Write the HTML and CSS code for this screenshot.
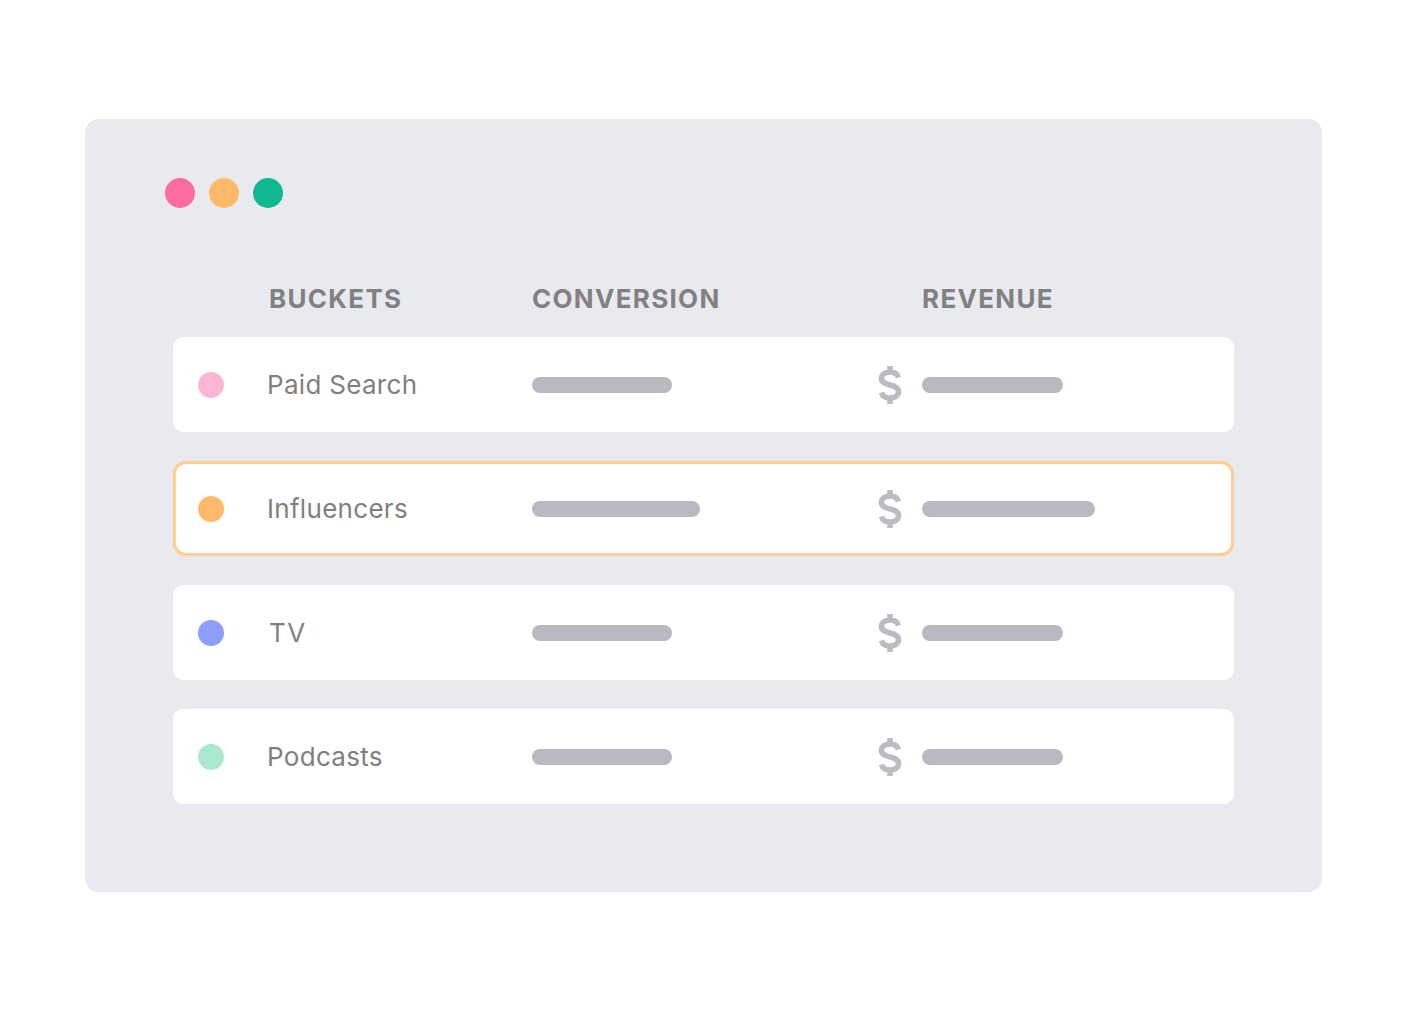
FILE: index.html
```html
<!DOCTYPE html>
<html>
<head>
<meta charset="utf-8">
<link rel="stylesheet" href="styles.css">
</head>
<body>
<div class="panel">
  <div class="lights">
    <span class="light red"></span>
    <span class="light amber"></span>
    <span class="light green"></span>
  </div>
  <div class="table">
    <div class="head">
      <span></span>
      <span class="h-bucket">BUCKETS</span>
      <span>CONVERSION</span>
      <span></span>
      <span>REVENUE</span>
    </div>
    <div class="row">
      <span class="dot pink"></span>
      <span class="name">Paid Search</span>
      <span class="bar" style="width:140px"></span>
      <svg class="dollar" viewBox="0 0 24 40"><path d="M12 1v6M12 33v6M20.5 12.5C19.5 9 16.5 7 12 7 6.5 7 3.5 10 3.5 13.5c0 4 3.5 5.3 8.5 6.5s8.5 2.5 8.5 6.5c0 4-3.5 6.5-8.5 6.5-4.5 0-7.5-2-8.5-5.5"/></svg>
      <span class="bar" style="width:141px"></span>
    </div>
    <div class="row active">
      <span class="dot orange"></span>
      <span class="name">Influencers</span>
      <span class="bar" style="width:168px"></span>
      <svg class="dollar" viewBox="0 0 24 40"><path d="M12 1v6M12 33v6M20.5 12.5C19.5 9 16.5 7 12 7 6.5 7 3.5 10 3.5 13.5c0 4 3.5 5.3 8.5 6.5s8.5 2.5 8.5 6.5c0 4-3.5 6.5-8.5 6.5-4.5 0-7.5-2-8.5-5.5"/></svg>
      <span class="bar" style="width:173px"></span>
    </div>
    <div class="row">
      <span class="dot blue"></span>
      <span class="name tv">TV</span>
      <span class="bar" style="width:140px"></span>
      <svg class="dollar" viewBox="0 0 24 40"><path d="M12 1v6M12 33v6M20.5 12.5C19.5 9 16.5 7 12 7 6.5 7 3.5 10 3.5 13.5c0 4 3.5 5.3 8.5 6.5s8.5 2.5 8.5 6.5c0 4-3.5 6.5-8.5 6.5-4.5 0-7.5-2-8.5-5.5"/></svg>
      <span class="bar" style="width:141px"></span>
    </div>
    <div class="row">
      <span class="dot mint"></span>
      <span class="name">Podcasts</span>
      <span class="bar" style="width:140px"></span>
      <svg class="dollar" viewBox="0 0 24 40"><path d="M12 1v6M12 33v6M20.5 12.5C19.5 9 16.5 7 12 7 6.5 7 3.5 10 3.5 13.5c0 4 3.5 5.3 8.5 6.5s8.5 2.5 8.5 6.5c0 4-3.5 6.5-8.5 6.5-4.5 0-7.5-2-8.5-5.5"/></svg>
      <span class="bar" style="width:141px"></span>
    </div>
  </div>
</div>
</body>
</html>
```

FILE: styles.css
```css
html, body {
  margin: 0;
  padding: 0;
  background: #ffffff;
}
body {
  font-family: Inter, "Liberation Sans", sans-serif;
}
.panel {
  box-sizing: border-box;
  margin: 119px 0 0 85px;
  width: 1237px;
  height: 773px;
  background: #e9eaef;
  border-radius: 14px;
  padding: 59px 0 0 80px;
}
.lights {
  display: flex;
  gap: 14px;
}
.light {
  width: 30px;
  height: 30px;
  border-radius: 50%;
}
.red { background: #fe6b9e; }
.amber { background: #ffb969; }
.green { background: #10b88f; }

.table {
  margin-left: 8px;
  width: 1061px;
  margin-top: 75px;
  display: flex;
  flex-direction: column;
  gap: 29px;
}
.head, .row {
  display: grid;
  grid-template-columns: 69px 265px 346px 44px 1fr;
  align-items: center;
  padding-left: 25px;
}
.head {
  height: 30px;
  margin-bottom: -5px;
  font-weight: 700;
  font-size: 26px;
  color: #818181;
  letter-spacing: 1.3px;
}
.h-bucket { padding-left: 2px; }
.row {
  box-sizing: border-box;
  height: 95px;
  background: #ffffff;
  border-radius: 10px;
}
.row.active {
  border: 3px solid #ffcf94;
  border-radius: 13px;
  padding-left: 22px;
  box-shadow: 0 0 1px #ffc783;
}
.dot {
  width: 26px;
  height: 26px;
  border-radius: 50%;
}
.pink { background: #ffb6d5; }
.orange { background: #ffb969; }
.blue { background: #8e9cfa; }
.mint { background: #abe8d0; }
.name {
  font-size: 26px;
  color: #7f7f7f;
  letter-spacing: 0.3px;
}
.name.tv { padding-left: 2px; letter-spacing: 1.5px; }
.bar {
  height: 16px;
  border-radius: 8px;
  background: #b9b9c2;
  filter: blur(0.6px);
}
.dollar {
  width: 24px;
  height: 40px;
  margin-left: 0;
  fill: none;
  stroke: #bbbbc3;
  stroke-width: 5.5;
  filter: blur(0.5px);
}
```
